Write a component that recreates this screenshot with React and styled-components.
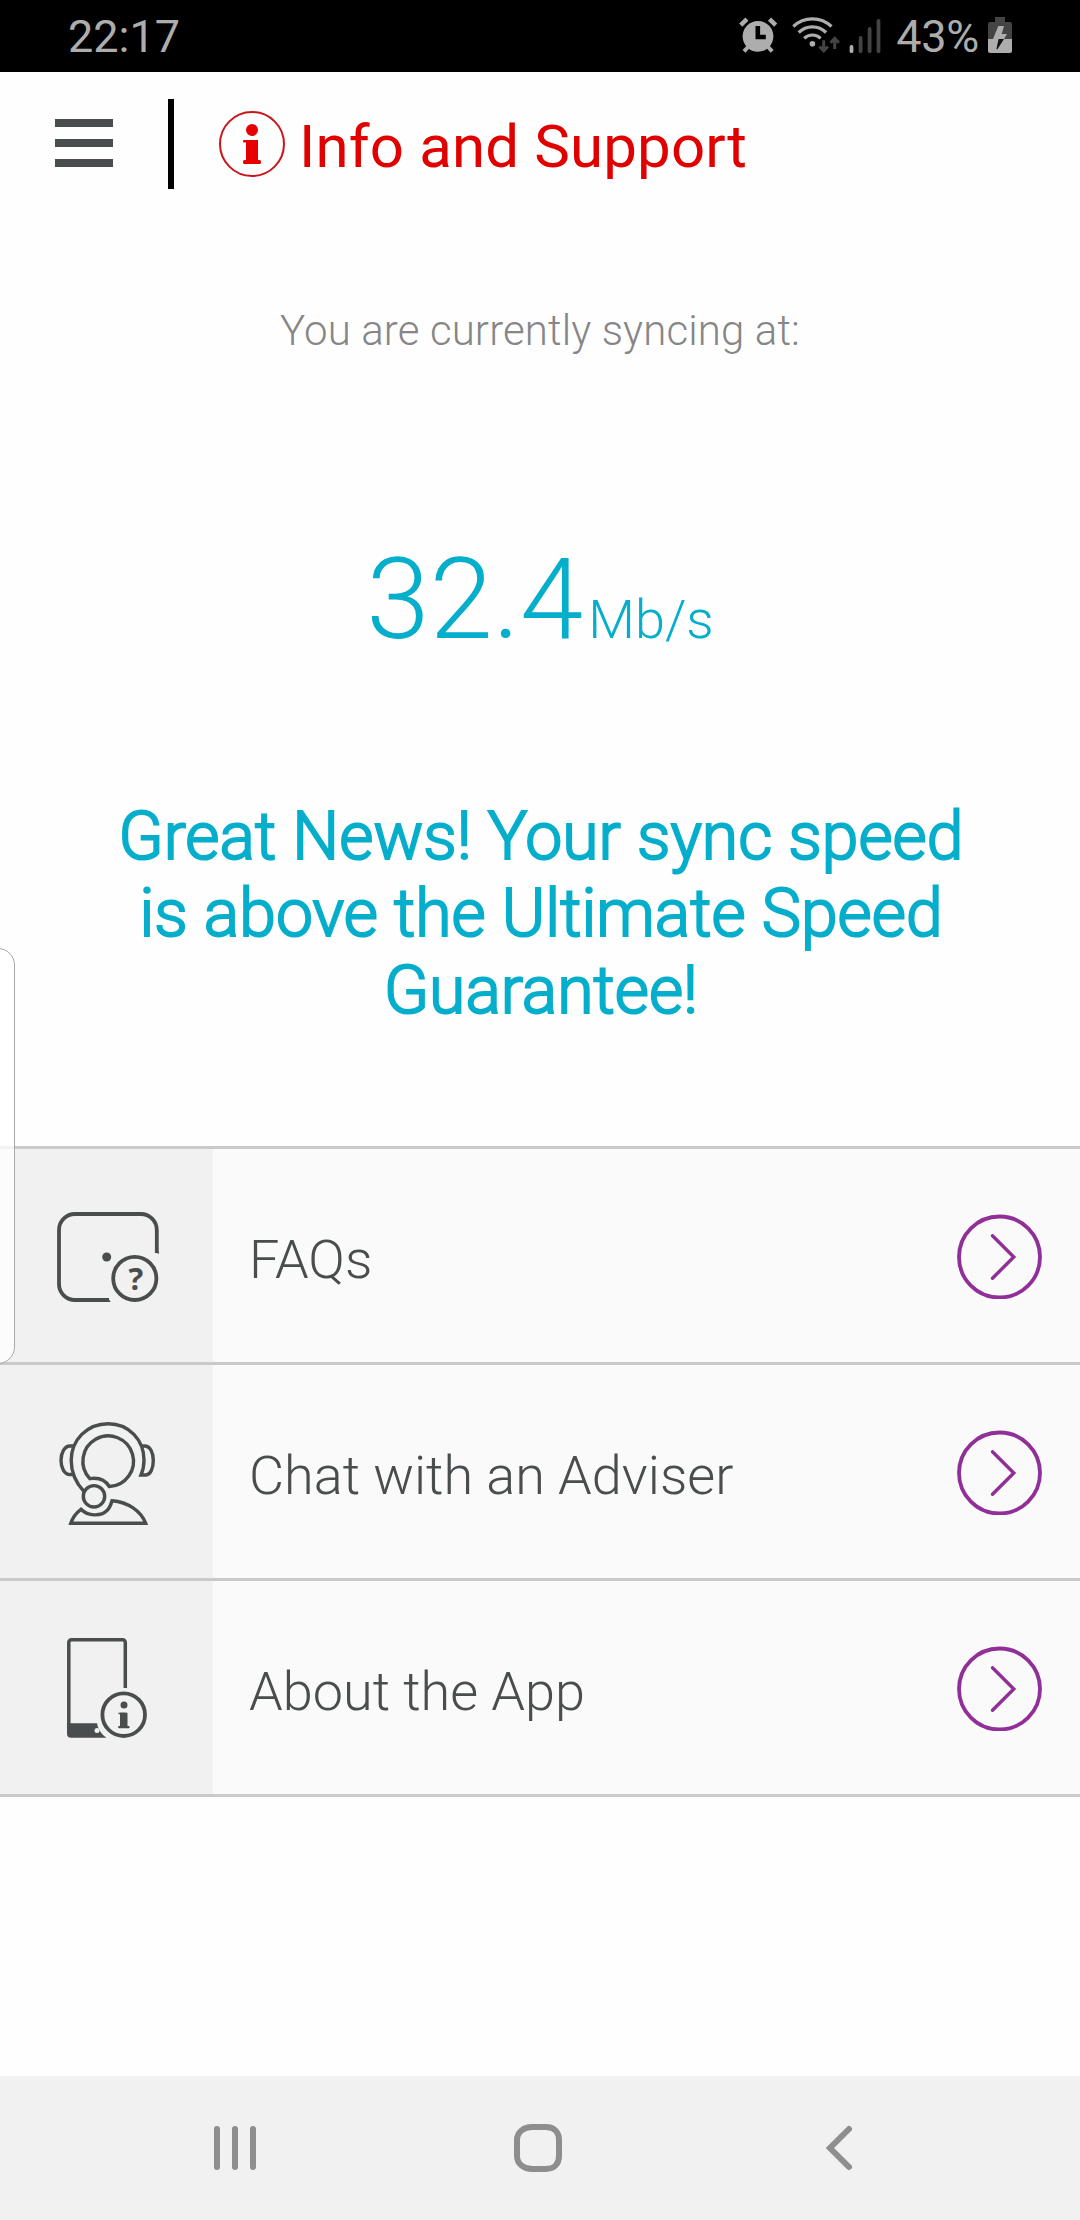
import styled, { createGlobalStyle } from "styled-components";

const GlobalStyle = createGlobalStyle`
  * {
    box-sizing: border-box;
  }

  body {
    margin: 0;
    background: #fefefe;
    font-family: Roboto, "Liberation Sans", sans-serif;
  }

  svg {
    display: block;
    flex: none;
  }
`;

const Screen = styled.div`
  position: relative;
  display: flex;
  flex-direction: column;
  width: 1080px;
  height: 2220px;
  overflow: hidden;
  background: #fefefe;
`;

const StatusBar = styled.div`
  display: flex;
  align-items: center;
  justify-content: space-between;
  height: 72px;
  padding: 0 68px;
  background: #000;
  color: #adadad;
  font-size: 45px;
  line-height: 72px;
`;

const Clock = styled.span`
  padding-top: 1px;
`;

const StatusIcons = styled.div`
  display: flex;
  align-items: center;
`;

const Connectivity = styled.div`
  display: flex;
  gap: 7px;
  margin-left: 13px;
`;

const Level = styled.span`
  margin: 1px 9px 0 14px;
  letter-spacing: -0.3px;
`;

const Header = styled.header`
  display: flex;
  align-items: center;
  height: 144px;
  padding-left: 55px;
`;

const MenuButton = styled.button`
  display: flex;
  flex-direction: column;
  gap: 12px;
  width: 58px;
  margin: 0 55px 2px 0;
  padding: 0;
  border: 0;
  background: none;
`;

const MenuBar = styled.span`
  height: 8px;
  background: #4a4d4e;
`;

const HeaderDivider = styled.div`
  width: 6px;
  height: 90px;
  margin-right: 45px;
  background: #000;
`;

const Title = styled.h1`
  margin: 0 0 0 14px;
  padding-top: 5px;
  color: #e00000;
  font-size: 60px;
  font-weight: 400;
  letter-spacing: 0.15px;
  line-height: 72px;
  white-space: nowrap;
`;

const SyncSection = styled.section`
  display: flex;
  flex-direction: column;
  align-items: center;
  height: 930px;
  padding-top: 90px;
`;

const SyncLabel = styled.p`
  margin: 0;
  color: #868686;
  font-size: 42px;
  font-weight: 300;
  letter-spacing: 0.12px;
  line-height: 50px;
`;

const Speed = styled.div`
  display: flex;
  align-items: baseline;
  height: 120px;
  margin-top: 183px;
  color: #05aecb;
  font-size: 114px;
  font-weight: 300;
  line-height: 120px;
`;

const Unit = styled.span`
  margin-left: 5px;
  font-size: 54px;
  line-height: 60px;
`;

// Light face thickened by a stroke, keeps the narrow light metrics
const Message = styled.p`
  width: 880px;
  margin: 139px 0 0;
  padding-left: 2px;
  color: #05aecb;
  font-size: 66px;
  font-weight: 300;
  letter-spacing: 0.03px;
  line-height: 77px;
  text-align: center;
  -webkit-text-stroke: 2.1px #05aecb;
`;

const List = styled.nav`
  border-top: 3px solid #cacaca;
`;

const Row = styled.a`
  display: flex;
  align-items: center;
  height: 216px;
  padding-right: 37px;
  border-bottom: 3px solid #cacaca;
  background: #fafafa;
  color: #4a4d4e;
`;

const RowIcon = styled.div`
  width: 213px;
  height: 213px;
  background: #f1f1f1;
`;

const RowLabel = styled.span`
  flex: 1;
  padding: 8px 0 0 36px;
  font-size: 54px;
  font-weight: 300;
  line-height: 64px;
`;

const NavBar = styled.div`
  display: grid;
  grid-template-columns: repeat(3, 302px);
  align-items: center;
  justify-items: center;
  height: 144px;
  margin-top: auto;
  padding-left: 84px;
  background: #f1f1f1;
`;

// Handle of the edge panel, floats over the page
const EdgeHandle = styled.div`
  position: absolute;
  top: 948px;
  left: -20px;
  width: 35px;
  height: 416px;
  border: 1.5px solid #a9a9a9;
  border-radius: 17px;
  background: rgba(255, 255, 255, 0.75);
`;

const AlarmIcon = () => (
  <svg width="40" height="40" viewBox="38 16 40 40" fill="none" stroke="#adadad">
    <circle cx="58" cy="36.3" r="15.4" fill="#adadad" stroke="none" />
    <path d="M40.7 25.2l6.2-6M75.7 25.2l-6.2-6" strokeWidth="4.4" />
    <path d="M44 51.3l5-5.3M72.2 51.3l-5-5.3" strokeWidth="4" />
    <path d="M57.8 26v11h8" stroke="#000" strokeWidth="4.6" />
  </svg>
);

const WifiIcon = () => (
  <svg width="50" height="40" viewBox="91 16 50 40" fill="none">
    <g stroke="#adadad" strokeWidth="3.2">
      <path d="M93.3 26.5a27.5 27.5 0 0 1 38.2 0" />
      <path d="M98.7 32.5a19.5 19.5 0 0 1 27.4 0" />
      <path d="M104.2 38.3a11.8 11.8 0 0 1 16.4 0" />
    </g>
    <circle cx="112.4" cy="43.8" r="2.8" fill="#adadad" />
    <g stroke="#444" strokeWidth="3">
      <path d="M123.7 40.3v10M119.5 46.5l4.2 4.3 4.2-4.3" />
      <path d="M134.7 49v-10M130.5 42.8l4.2-4.3 4.2 4.3" />
    </g>
  </svg>
);

const SignalIcon = () => (
  <svg width="34" height="40" viewBox="148 16 34 40" strokeLinecap="round" strokeWidth="3.8">
    <path d="M151.5 47v4.2" stroke="#adadad" />
    <path d="M160.6 38v13.2M169.6 29v22.2M178.5 21v30.2" stroke="#444" />
  </svg>
);

const BatteryIcon = () => (
  <svg width="24" height="40" viewBox="288 16 24 40">
    <path d="M295 17h10v5h5a2 2 0 0 1 2 2v15h-24V24a2 2 0 0 1 2-2h5z" fill="#444" />
    <path d="M288 39h24v12a2 2 0 0 1-2 2h-20a2 2 0 0 1-2-2z" fill="#adadad" />
    <path d="M298.3 26H304L301.7 34h5.3L304 39H293z" fill="#adadad" />
    <path d="M298.6 39H304L297.4 49.2H296.4z" fill="#111" />
  </svg>
);

const InfoIcon = () => (
  <svg width="66" height="66" viewBox="0 0 66 66" fill="#e60000">
    <circle cx="33" cy="33" r="32" fill="none" stroke="#c9151b" strokeWidth="2" />
    <circle cx="33" cy="19" r="6" />
    <rect x="27" y="29" width="12" height="22" />
    <rect x="24" y="29" width="14" height="2.6" rx="1.3" />
    <rect x="24" y="49" width="18" height="4" rx="1.5" />
  </svg>
);

const FaqIcon = () => (
  <svg width="213" height="213" viewBox="0 0 213 213" fill="none" stroke="#4a4d4e" strokeWidth="3.8">
    <path d="M156.8 104V81a16 16 0 0 0-16-16H75a16 16 0 0 0-16 16v54a16 16 0 0 0 16 16h34" />
    <path d="M155 102.5l3.7 2.8v-3zM108 149.2l2.8 3.7h-3z" fill="#4a4d4e" stroke="none" />
    <circle cx="134.8" cy="129.4" r="21.6" />
    <circle cx="106.7" cy="108" r="4.5" fill="#4a4d4e" stroke="none" />
    <text
      x="136"
      y="140.7"
      textAnchor="middle"
      fill="#4a4d4e"
      stroke="none"
      fontFamily="Open Sans"
      fontSize="31"
      fontWeight="700"
    >
      ?
    </text>
  </svg>
);

const AdviserIcon = () => (
  <svg width="213" height="213" viewBox="0 0 213 213" fill="none" stroke="#4a4d4e" strokeWidth="3.4">
    <path d="M84 126.5C76 118 71.2 108 71.2 95.5C71.2 75 87 58.7 108.3 58.7C129 58.7 144 75 144 95C144 100.5 143 105.5 141 110H146C150.5 110 153.3 103 153.3 95.5C153.3 88 150.5 81 144.5 81H142" />
    <path d="M74 81h-4c-5.5 0-9 7-9 14.5s3.5 14 9 14h3.5" />
    <path d="M89.8 113.6A25.3 25.3 0 1 1 109.3 121.5C105 114.5 98 112.3 89.8 113.6Z" />
    <circle cx="94" cy="131.3" r="10.7" />
    <path d="M70.8 158.3C72.5 153 76 148 81 144.3C88 151.5 101 151.5 107 145.5C110 142.5 111 139.5 112 135.7C128 137 141 146 145.7 158.3Z" />
  </svg>
);

const AboutIcon = () => (
  <svg width="213" height="213" viewBox="0 0 213 213" fill="#4a4d4e">
    <path
      d="M125.3 107V61.5a2.8 2.8 0 0 0-2.8-2.8H71.6a2.8 2.8 0 0 0-2.8 2.8V150"
      fill="none"
      stroke="#4a4d4e"
      strokeWidth="3.5"
    />
    <path d="M67 142.3h30c1 5.7 4 10.7 9.5 14.4H71a4 4 0 0 1-4-4z" />
    <circle cx="97" cy="149.4" r="2.5" fill="#f1f1f1" />
    <circle cx="123.7" cy="133.7" r="21.3" fill="none" stroke="#4a4d4e" strokeWidth="3.8" />
    <circle cx="124" cy="124" r="3.5" />
    <rect x="120" y="131.7" width="7.5" height="14" />
    <rect x="118.5" y="131.7" width="7" height="1.5" />
    <rect x="118.2" y="145" width="11.4" height="2.2" rx="0.8" />
  </svg>
);

const ArrowIcon = () => (
  <svg width="87" height="87" viewBox="0 0 87 87" fill="none" stroke="#902f98">
    <circle cx="43.5" cy="45" r="40.5" strokeWidth="3.8" />
    <path d="M36.5 23.8L57.8 45L36.5 66.2" strokeWidth="3.4" strokeLinecap="round" />
  </svg>
);

const NavIcon = ({ d }) => (
  <svg width="60" height="60" viewBox="0 0 60 60" fill="none" stroke="#8e8e8e" strokeWidth="6" strokeLinecap="round">
    <path d={d} />
  </svg>
);

const rows = [
  { label: "FAQs", Icon: FaqIcon },
  { label: "Chat with an Adviser", Icon: AdviserIcon },
  { label: "About the App", Icon: AboutIcon },
];

const navIcons = [
  "M12 11v38M30 11v38M48 11v38",
  "M25 9H39C47 9 52 14 52 22V38C52 46 47 51 39 51H25C17 51 10 46 10 38V22C10 14 17 9 25 9Z",
  "M40 11L21 30L40 49",
];

function App() {
  return (
    <>
      <GlobalStyle />
      <Screen>
        <StatusBar>
          <Clock>22:17</Clock>
          <StatusIcons>
            <AlarmIcon />
            <Connectivity>
              <WifiIcon />
              <SignalIcon />
            </Connectivity>
            <Level>43%</Level>
            <BatteryIcon />
          </StatusIcons>
        </StatusBar>
        <Header>
          <MenuButton aria-label="Menu">
            <MenuBar />
            <MenuBar />
            <MenuBar />
          </MenuButton>
          <HeaderDivider />
          <InfoIcon />
          <Title>Info and Support</Title>
        </Header>
        <SyncSection>
          <SyncLabel>You are currently syncing at:</SyncLabel>
          <Speed>
            32.4<Unit>Mb/s</Unit>
          </Speed>
          <Message>
            Great News! Your sync speed
            <br />
            is above the Ultimate Speed
            <br />
            Guarantee!
          </Message>
        </SyncSection>
        <List>
          {rows.map(({ label, Icon }) => (
            <Row key={label}>
              <RowIcon>
                <Icon />
              </RowIcon>
              <RowLabel>{label}</RowLabel>
              <ArrowIcon />
            </Row>
          ))}
        </List>
        <NavBar>
          {navIcons.map((d) => (
            <NavIcon key={d} d={d} />
          ))}
        </NavBar>
        <EdgeHandle />
      </Screen>
    </>
  );
}

export default App;
